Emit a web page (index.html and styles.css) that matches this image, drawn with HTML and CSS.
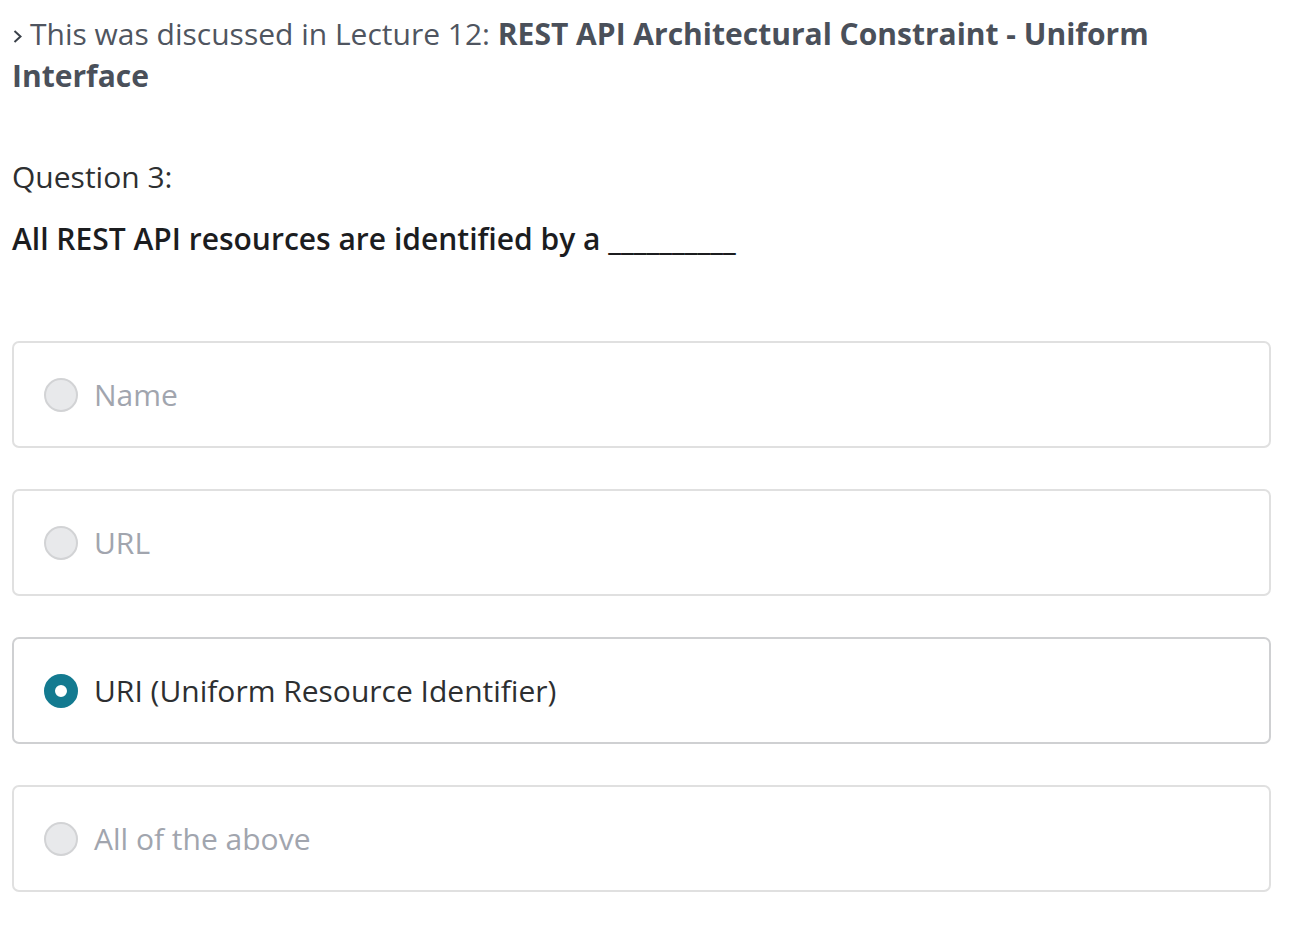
FILE: index.html
```html
<!DOCTYPE html>
<html lang="en">
<head>
<meta charset="utf-8">
<title>Question 3</title>
<link rel="stylesheet" href="styles.css">
</head>
<body>
<div class="page">
  <p class="ref"><svg class="chev" width="12" height="16" viewBox="0 0 12 16"><path d="M2.5 3 L8.5 8.5 L2.5 14" fill="none" stroke="#3a4049" stroke-width="2"/></svg>This was discussed in Lecture 12: <b>REST API Architectural Constraint - Uniform Interface</b></p>
  <p class="qnum">Question 3:</p>
  <p class="qtext">All REST API resources are identified by a __________</p>
  <div class="options">
    <label class="opt"><span class="radio"></span><span class="label">Name</span></label>
    <label class="opt"><span class="radio"></span><span class="label">URL</span></label>
    <label class="opt selected"><span class="radio"></span><span class="label">URI (Uniform Resource Identifier)</span></label>
    <label class="opt"><span class="radio"></span><span class="label">All of the above</span></label>
  </div>
</div>
</body>
</html>
```
FILE: styles.css
```css
* { box-sizing: border-box; }
html, body { margin: 0; padding: 0; background: #fff; }
body { font-family: "Open Sans", "Liberation Sans", sans-serif; }
.page { padding: 13px 39px 0 12px; width: 1310px; }
.ref {
  margin: 0;
  font-size: 30px;
  line-height: 42px;
  color: #4f5560;
}
.ref b { font-weight: 700; color: #4a505a; }
.chev { vertical-align: 1px; margin-right: 6px; }
.qnum {
  margin: 60px 0 0;
  font-size: 30px;
  line-height: 40px;
  color: #2d2f31;
}
.qtext {
  margin: 22px 0 0;
  font-size: 30px;
  line-height: 40px;
  font-weight: 600;
  color: #1c1d1f;
}
.options {
  margin-top: 82px;
  display: flex;
  flex-direction: column;
  gap: 41px;
}
.opt {
  display: flex;
  align-items: center;
  height: 107px;
  border: 2px solid #e0e0e0;
  border-radius: 7px;
  padding-left: 30px;
}
.opt.selected { border-color: #cfd0d2; }
.radio {
  width: 34px;
  height: 34px;
  border-radius: 50%;
  background: #e8e9eb;
  border: 2px solid #d2d3d5;
  margin-right: 16px;
  flex: none;
}
.selected .radio {
  background: #fff;
  border: 11px solid #137a90;
}
.label {
  font-size: 30px;
  color: #a1a5ae;
}
.selected .label { color: #2d2f31; }
```
